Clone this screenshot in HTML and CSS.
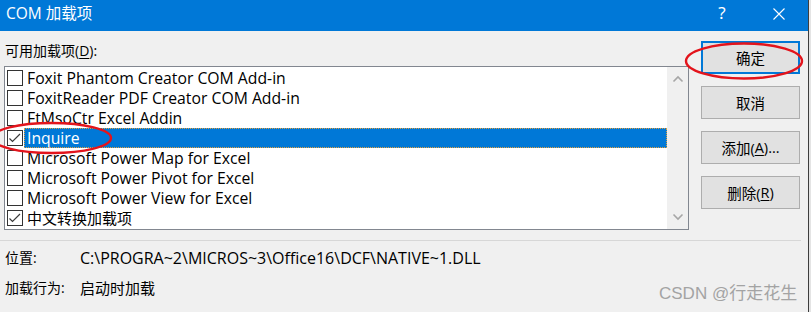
FILE: index.html
```html
<!DOCTYPE html>
<html lang="zh-CN">
<head>
<meta charset="utf-8">
<title>COM 加载项</title>
<link rel="stylesheet" href="styles.css">
</head>
<body>
<div class="window">
  <div class="dialog">
    <div class="titlebar">
      <span class="title">COM 加载项</span>
      <div class="tb-btns">
        <span class="tb-btn help">?</span>
        <span class="tb-btn close">
          <svg width="12" height="12" viewBox="0 0 12 12"><path d="M0.5 0.5 L11.5 11.5 M11.5 0.5 L0.5 11.5" stroke="#fff" stroke-width="1.1" fill="none"/></svg>
        </span>
      </div>
    </div>
    <div class="body">
      <div class="main">
        <div class="left">
          <div class="label">可用加载项(<u>D</u>):</div>
          <div class="list">
            <div class="rows">
              <div class="row"><span class="cb"></span><span class="name">Foxit Phantom Creator COM Add-in</span></div>
              <div class="row"><span class="cb"></span><span class="name">FoxitReader PDF Creator COM Add-in</span></div>
              <div class="row"><span class="cb"></span><span class="name">FtMsoCtr Excel Addin</span></div>
              <div class="row selected"><span class="cb checked"><svg width="16" height="16" viewBox="0 0 16 16"><path d="M2.5 8.5 L5.5 11.5 L13 4" stroke="#3a3a3a" stroke-width="1.2" fill="none"/></svg></span><span class="name">Inquire</span></div>
              <div class="row"><span class="cb"></span><span class="name">Microsoft Power Map for Excel</span></div>
              <div class="row"><span class="cb"></span><span class="name">Microsoft Power Pivot for Excel</span></div>
              <div class="row"><span class="cb"></span><span class="name">Microsoft Power View for Excel</span></div>
              <div class="row"><span class="cb checked"><svg width="16" height="16" viewBox="0 0 16 16"><path d="M2.5 8.5 L5.5 11.5 L13 4" stroke="#3a3a3a" stroke-width="1.2" fill="none"/></svg></span><span class="name cjk">中文转换加载项</span></div>
            </div>
            <div class="scrollbar">
              <svg width="12" height="8" viewBox="0 0 12 8"><path d="M1.5 6.5 L6 2 L10.5 6.5" stroke="#a6a6a6" stroke-width="1.6" fill="none"/></svg>
              <svg width="12" height="8" viewBox="0 0 12 8"><path d="M1.5 1.5 L6 6 L10.5 1.5" stroke="#a6a6a6" stroke-width="1.6" fill="none"/></svg>
            </div>
          </div>
        </div>
        <div class="buttons">
          <div class="btn default">确定</div>
          <div class="btn">取消</div>
          <div class="btn">添加(<u>A</u>)...</div>
          <div class="btn">删除(<u>R</u>)</div>
        </div>
      </div>
      <div class="sep"></div>
      <div class="info">
        <div class="info-row"><span class="key">位置:</span><span class="val path">C:\PROGRA~2\MICROS~3\Office16\DCF\NATIVE~1.DLL</span></div>
        <div class="info-row"><span class="key">加载行为:</span><span class="val cjk">启动时加载</span></div>
      </div>
    </div>
  </div>
  <div class="edge"></div>
</div>
<div class="watermark">CSDN @行走花生</div>
<svg class="marks" width="811" height="312" viewBox="0 0 811 312">
  <ellipse cx="744" cy="61" rx="58" ry="17.5" stroke="#e3141c" stroke-width="2.4" fill="none"/>
  <ellipse cx="51.5" cy="138" rx="59.5" ry="15" stroke="#e3141c" stroke-width="2.4" fill="none"/>
</svg>
</body>
</html>
```

FILE: styles.css
```css
* { box-sizing: border-box; }
html, body { margin: 0; padding: 0; }
body {
  width: 811px;
  height: 312px;
  overflow: hidden;
  position: relative;
  background: #f0f0f0;
  font-family: "Open Sans", "Noto Sans CJK SC", sans-serif;
  color: #000;
}
u { text-decoration: underline; text-underline-offset: 2px; text-decoration-thickness: 1px; }

.window { display: flex; width: 811px; height: 312px; }
.dialog { width: 808px; display: flex; flex-direction: column; background: #f0f0f0; }
.edge { width: 3px; background: #e4e4e4; border-left: 1px solid #3d3d3d; }

.titlebar {
  height: 31px;
  background: #0078d7;
  color: #fff;
  display: flex;
  align-items: flex-start;
  justify-content: space-between;
  padding-top: 3px;
}
.title { padding-left: 6px; font-size: 15.5px; line-height: 20px; }
.tb-btns { display: flex; gap: 11px; padding-right: 6px; }
.tb-btn { width: 46px; height: 20px; display: flex; align-items: center; justify-content: center; }
.help { font-family: "Noto Sans", sans-serif; font-size: 17px; line-height: 20px; }
.close svg { display: block; margin-top: 1px; }

.body { display: flex; flex-direction: column; }
.main { display: flex; align-items: flex-start; }
.left { padding-left: 4px; }
.label {
  margin-top: 10px;
  height: 20px;
  line-height: 20px;
  font-size: 14px;
  padding-left: 1px;
}
.list {
  margin-top: 5px;
  width: 685px;
  height: 164px;
  border: 1px solid #828790;
  background: #fff;
  display: flex;
}
.rows { flex: 1; padding-top: 1px; }
.row { height: 20px; display: flex; align-items: center; padding-left: 2px; font-size: 15.75px; }
.cb {
  width: 16px;
  height: 16px;
  border: 1px solid #333;
  background: #fff;
  margin-right: 1px;
  flex: none;
  position: relative;
}
.cb svg { position: absolute; left: -1px; top: -1px; }
.name { padding-left: 3px; height: 20px; line-height: 20px; white-space: nowrap; }
.name.cjk { font-size: 15px; }
.selected .name { flex: 1; background: #0078d7; color: #fff; outline: 1px dotted #e0a040; outline-offset: -1px; }
.scrollbar {
  width: 21px;
  background: #f0f0f0;
  display: flex;
  flex-direction: column;
  justify-content: space-between;
  align-items: center;
  padding: 8px 0 8px 1px;
}
.scrollbar svg { display: block; }

.buttons {
  margin-top: 10px;
  margin-left: 12px;
  width: 99px;
  display: flex;
  flex-direction: column;
  gap: 12px;
}
.btn {
  height: 33px;
  background: #e1e1e1;
  border: 1px solid #adadad;
  display: flex;
  align-items: center;
  justify-content: center;
  font-size: 14.5px;
}
.btn.default { border: 2px solid #0078d7; }

.sep { margin-top: 10px; height: 1px; width: 801px; background: #d7d7d7; }
.info { padding-left: 5px; margin-top: 7px; display: flex; flex-direction: column; gap: 10px; font-size: 14px; }
.info-row { display: flex; align-items: center; height: 20px; line-height: 20px; }
.key { width: 75px; }
.val.path { font-size: 16px; }
.val.cjk { font-size: 15px; }

.watermark {
  position: absolute;
  left: 659px;
  top: 284px;
  font-family: "Liberation Sans", "Noto Sans CJK SC", sans-serif;
  font-size: 17px;
  line-height: 20px;
  color: #a3a3a3;
}
.marks { position: absolute; left: 0; top: 0; pointer-events: none; }
```
